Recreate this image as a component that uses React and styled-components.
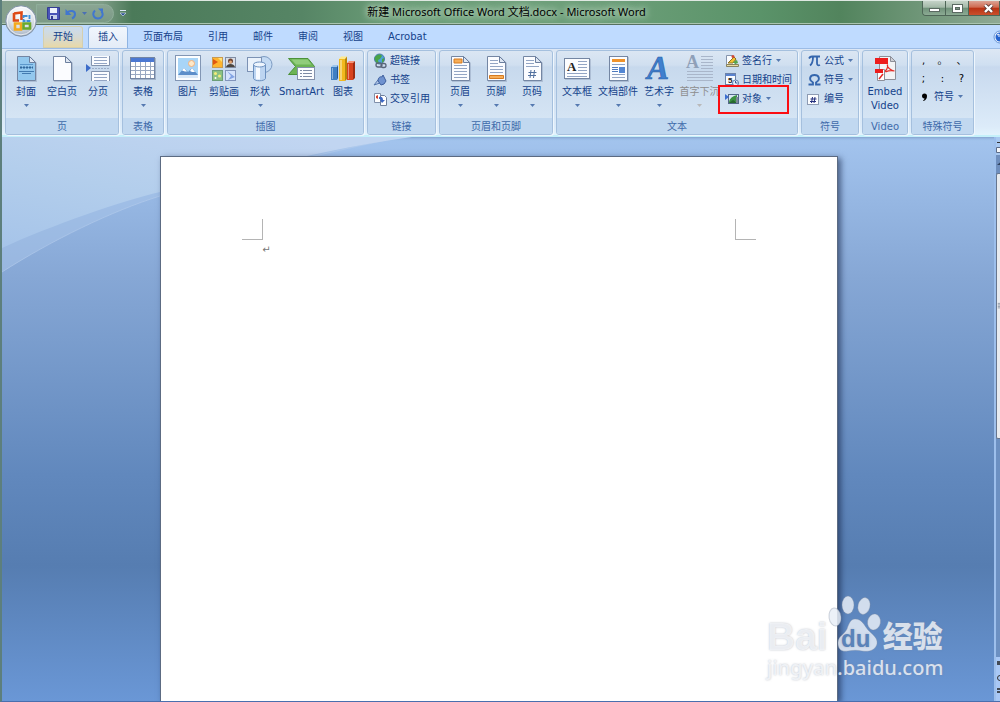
import React from 'react';
import styled, { createGlobalStyle } from 'styled-components';

const GlobalStyle = createGlobalStyle`
    * {
        box-sizing: border-box;
    }
    body {
        margin: 0;
        font-family: 'DejaVu Sans', 'Noto Sans CJK SC', sans-serif;
        font-size: 10px;
        color: #15428b;
    }
    button {
        margin: 0;
        padding: 0;
        border: 0;
        background: none;
        font: inherit;
        color: inherit;
        cursor: pointer;
    }
`

const Window = styled.div`
    position: relative;
    display: flex;
    flex-direction: column;
    min-height: 100vh;
    overflow: hidden;
    border-left: 2px solid #5d7f7c;
    border-bottom: 1px solid #4a6fae;
    background: #bfdbff;
`

/* ---------- title bar ---------- */

const TitleBar = styled.header`
    display: grid;
    grid-template-columns: 1fr auto 1fr;
    height: 25px;
    border-top: 1px solid #dfe8e2;
    border-bottom: 1px solid #56715f;
    box-shadow: inset 0 -1px 0 #a9c4b0;
    background: linear-gradient(90deg, #86a18d 0, #7d9c86 100px, #4b7a59 130px, #568565 300px, #6d9f79 40%, #6d9f79 60%, #5a9369 76%, #52845d 84%, #6f9678 92%, #8fa994 100%);
`

const QuickAccess = styled.div`
    display: flex;
    align-items: center;
    justify-self: start;
    height: 19px;
    margin: 3px 0 0 34px;
    padding: 0 9px 0 10px;
    gap: 5px;
    border: 1px solid #8fae9a;
    border-radius: 0 10px 10px 0;
    background: linear-gradient(#8aa593, #7b9a86);
`

const QuickButton = styled.button`
    display: flex;
    align-items: center;
`

const QuickWrap = styled.div`
    display: flex;
    align-items: flex-start;
    gap: 6px;
`

const MoreButton = styled.button`
    display: flex;
    height: 24px;
    align-items: center;
`

const Title = styled.h1`
    margin: 0;
    padding-left: 11px;
    font-family: 'Noto Sans', 'Noto Sans CJK SC', sans-serif;
    font-size: 11px;
    font-weight: 400;
    line-height: 22px;
    color: #000;
    white-space: nowrap;
    text-shadow: 0 0 6px #cfe3d3, 0 0 8px #cfe3d3;
`

const WindowControls = styled.div`
    display: flex;
    justify-self: end;
    height: 15px;
    border: 1px solid #4e6657;
    border-top: 0;
    border-right: 0;
    border-radius: 0 0 0 4px;
    overflow: hidden;
`

const ControlButton = styled.button`
    display: flex;
    align-items: center;
    justify-content: center;
    width: ${props => props.$close ? '31px' : '23px'};
    padding-left: ${props => props.$close ? '8px' : '0'};
    border-right: 1px solid #4e6657;
    background: ${props => props.$close
        ? 'linear-gradient(#dba394, #cf6a50 45%, #b93214 50%, #c9502c)'
        : 'linear-gradient(#c5d3c8, #a3b9a8 45%, #6f9179 50%, #8cab94)'};
`

const OfficeButton = styled.button`
    position: absolute;
    z-index: 2;
    top: 5px;
    left: 3px;
    width: 32px;
    height: 32px;
`

/* ---------- tabs ---------- */

const Tabs = styled.nav`
    display: flex;
    align-items: flex-end;
    height: 23px;
    padding-left: 41px;
    gap: 5px;
    background: #bfdbff;
`

const Tab = styled.button`
    height: 22px;
    padding: 0 10px;
    line-height: 22px;
    border-radius: 3px 3px 0 0;
    ${props => props.$hot && `
        background: linear-gradient(#c9dcf2, #d5d9d4 50%, #ead9a4);
        box-shadow: inset 0 0 0 1px #d5cfae;
    `}
    ${props => props.$active && `
        background: linear-gradient(#f2f7fd, #e3ecf7);
        box-shadow: inset 1px 1px 0 #8fb4e2, inset -1px 0 0 #8fb4e2;
    `}
`

const HelpButton = styled.button`
    align-self: center;
    width: 7px;
    height: 14px;
    margin-left: auto;
    overflow: hidden;
`

/* ---------- ribbon ---------- */

const Ribbon = styled.div`
    display: flex;
    gap: 3px;
    height: 89px;
    padding: 1px 3px 0;
    border-top: 1px solid #9cbce6;
    border-bottom: 2px solid #c4f0fa;
    background: linear-gradient(#dde7f4, #cfdff1 16px, #c8d9ee 18px, #dcebf9 90%, #e3f3fd);
`

const GroupBox = styled.section`
    display: flex;
    flex: none;
    flex-direction: column;
    height: 85px;
    border: 1px solid #a5c0de;
    border-radius: 3px;
    box-shadow: 1px 1px 0 #eef6fd;
    background: linear-gradient(#dbe6f3, #d0dff0 14px, #c7d9ed 16px, #d9e8f6);
    overflow: hidden;
`

const GroupBody = styled.div`
    display: flex;
    flex: 1;
    padding: 0 2px;
`

const GroupLabel = styled.h2`
    margin: 0;
    height: 16px;
    font-size: 10px;
    font-weight: 400;
    line-height: 17px;
    text-align: center;
    color: #3e6aaa;
    background: #c1d8f0;
`

const BigButton = styled.button`
    display: flex;
    flex-direction: column;
    align-items: center;
    width: ${props => props.$width || 36}px;
    padding-top: 4px;
    line-height: 14px;
    white-space: nowrap;
    color: ${props => props.disabled ? '#8d8d8d' : 'inherit'};

    svg {
        flex: none;
        overflow: visible;
    }
    span {
        margin-top: 2px;
    }
    span + svg {
        margin-top: 5px;
    }
`

const Column = styled.div`
    display: flex;
    flex-direction: column;
`

const SmallRow = styled.div`
    position: relative;
    display: flex;
`

const SmallButton = styled.button`
    display: flex;
    align-items: center;
    height: 19px;
    padding: 0 3px;
    gap: 1px;
    line-height: 19px;
    white-space: nowrap;

    span + svg {
        margin-left: 3px;
    }
`

const RedBox = styled.i`
    position: absolute;
    top: -4px;
    left: -4px;
    width: 71px;
    height: 29px;
    border: 2px solid #fb0d12;
    pointer-events: none;
`

const MarkRow = styled.div`
    display: flex;
    height: 18px;
`

const MarkButton = styled.button`
    width: 19px;
    color: #000;
    line-height: 20px;
`

/* ---------- document ---------- */

const Workspace = styled.main`
    position: relative;
    display: flex;
    flex: 1;
    padding-left: 2px;
    background: linear-gradient(#a3c4ee, #86a7d5 25%, #6188bd 60%, #567db1 76%, #6a97d6);
    box-shadow: inset 0 3px 3px -2px #7f9cc8;
`

const Swoosh = styled.svg`
    position: absolute;
    top: 0;
    left: 0;
`

const Page = styled.article`
    position: relative;
    display: flex;
    flex-direction: column;
    width: 68%;
    margin: 19px auto 0;
    padding: 62px 81px 0;
    border: 1px solid #5c6b82;
    border-bottom: 0;
    background: #fff;
    box-shadow: 3px 2px 6px rgba(20, 35, 70, 0.6);
    color: #777;
`

const Margins = styled.div`
    display: flex;
    justify-content: space-between;
`

const Corner = styled.i`
    width: 21px;
    height: 21px;
    border-bottom: 1px solid #b4b4b4;
    ${props => props.$right ? 'border-left' : 'border-right'}: 1px solid #b4b4b4;
`

const Paragraph = styled.p`
    margin: 4px 0 0 20px;
    line-height: 12px;
`

const ScrollGutter = styled.aside`
    position: relative;
    display: flex;
    flex-direction: column;
    width: 6px;
    border-left: 2px solid #9dbfec;
    background: #6c90c2;
    overflow: hidden;
`

const ScrollTop = styled.div`
    height: 36px;
    background: linear-gradient(#a9c8f0 18px, #6f8fbe 18px);

    svg {
        display: block;
    }
`

const Thumb = styled.div`
    display: flex;
    align-items: center;
    height: 266px;
    border: 1px solid #66768f;
    border-right: 0;
    border-radius: 2px 0 0 2px;
    background: #e8ebef;
`

const ScrollBottom = styled.div`
    height: 44px;
    margin-top: auto;
    background: #a9c8f5;
`

/* ---------- watermark ---------- */

const Watermark = styled.div`
    position: absolute;
    right: 55px;
    bottom: 20px;
    width: 178px;
    color: rgba(248, 250, 253, 0.78);
    text-shadow: 0 0 2px rgba(120, 130, 150, 0.5);
    font-family: 'Liberation Sans', 'Noto Sans CJK SC', sans-serif;
    white-space: nowrap;
    pointer-events: none;
`

const Brand = styled.div`
    display: flex;
    align-items: flex-end;
    height: 57px;
    font-size: 39px;
    font-weight: 700;
    line-height: 30px;

    svg {
        flex: none;
    }
    b + svg + b {
        font-size: 30px;
    }
`

const Site = styled.div`
    margin-top: 3px;
    font-family: 'Noto Sans', sans-serif;
    font-size: 20px;
    font-weight: 500;
    line-height: 26px;
`

/* ---------- icons ---------- */

const Arrow = ({ color = '#5579b0' }) => (
    <svg width="5" height="3" viewBox="0 0 5 3"><path d="M0 0h5L2.5 3z" fill={color} /></svg>
)

const Big = ({ children, w = 28 }) => (
    <svg width={w} height="28" viewBox={`0 0 ${w} 28`}>{children}</svg>
)

const Small = ({ children }) => (
    <svg width="16" height="16" viewBox="0 0 16 16">{children}</svg>
)

const Sheet = ({ fill = '#fbfcff' }) => (
    <g>
        <path d="M6 2h13l6 6v19H6z" fill="#8b9bb5" opacity=".45" />
        <path d="M5.500 1.500h12l6 6v18h-18z" fill={fill} stroke="#7486a3" />
        <path d="M17.500 1.500v6h6z" fill="#dfe7f3" stroke="#6c7f9e" />
    </g>
)

const Lines = ({ x = 8, y = 9, w = 12, n = 5, gap = 3, color = '#93a5c4' }) => (
    <g stroke={color}>
        {Array.from({ length: n }, (_, i) => <path key={i} d={`M${x} ${y + i * gap + 0.5}h${w}`} />)}
    </g>
)

const OfficeLogo = () => (
    <svg width="32" height="32" viewBox="0 0 32 32">
        <defs>
            <radialGradient id="orb" cx=".5" cy=".25" r=".8">
                <stop offset="0" stopColor="#fff" />
                <stop offset=".55" stopColor="#dde3ea" />
                <stop offset="1" stopColor="#99a8bb" />
            </radialGradient>
        </defs>
        <circle cx="16" cy="16" r="15.300" fill="url(#orb)" stroke="#7f90a5" />
        <circle cx="16" cy="16" r="13.800" fill="none" stroke="#fff" opacity=".7" />
        <g fill="none" strokeWidth="2.600">
            <path d="M9 8.500l7.500-1v7.500M14 15.500H9V8" stroke="#dd4a17" />
            <path d="M18.500 11h6v5h-6z" stroke="#3d8fd8" strokeWidth="1.800" strokeDasharray="4 1" />
            <path d="M10 18.500h6v6h-6z" stroke="#f4a91c" />
            <path d="M18.500 18.500H25V23.500h-6.500z" stroke="#6aa92c" />
        </g>
    </svg>
)

const SaveIcon = () => (
    <svg width="13" height="13" viewBox="0 0 13 13">
        <path d="M.5.5h12v12h-11l-1-1z" fill="#4a54b8" stroke="#343c93" />
        <path d="M3 1h7v5H3z" fill="#eef2fc" />
        <path d="M3 8h7v4H3z" fill="#c9d2ea" />
        <path d="M4 9h2v3H4z" fill="#343c93" />
    </svg>
)

const UndoIcon = () => (
    <svg width="12" height="12" viewBox="0 0 12 12">
        <path d="M2 4.500c3-2.500 8-2 8 1.500 0 2-1 3.500-3 4.500" fill="none" stroke="#4177cf" strokeWidth="2" />
        <path d="M.5 1v6h6z" fill="#4177cf" />
    </svg>
)

const RedoIcon = () => (
    <svg width="12" height="12" viewBox="0 0 12 12">
        <path d="M3 2.500C-.5 6 2 10.500 6 10.500s6-4 3.500-7" fill="none" stroke="#4177cf" strokeWidth="2" />
        <path d="M6 .5h5v5z" fill="#4177cf" />
    </svg>
)

const CoverIcon = () => (
    <Big>
        <Sheet fill="#93c8ee" />
        <Lines y={9} x={8} n={2} w={13} color="#5d98cb" />
        <path d="M8 12.500h13" stroke="#33689b" strokeWidth="2" strokeDasharray="2 1" />
        <path d="M7 16.500h15M10 18.500h9" stroke="#437bb0" />
    </Big>
)

const BlankIcon = () => <Big><Sheet /></Big>

const BreakIcon = () => (
    <Big>
        <path d="M7.500 1v9.500h18V1M7.500 26v-9.500h18V26" fill="#fafcff" stroke="#8293ae" />
        <Lines x={10} y={2} n={3} w={13} />
        <Lines x={10} y={19} n={3} w={13} />
        <path d="M2 9l5 4-5 4z" fill="#3c6cc9" />
        <path d="M8 13.500h18" stroke="#9bacc7" strokeDasharray="2 1" />
    </Big>
)

const TableIcon = () => (
    <Big>
        <rect x="2" y="3" width="25" height="22" fill="#7889a5" opacity=".5" />
        <rect x="1.500" y="2.500" width="24" height="21" fill="#fff" stroke="#7385a3" />
        <path d="M2 3h23v4H2z" fill="#4b78d2" />
        <path d="M2 11.500h23M2 15.500h23M2 19.500h23M6.500 7v16M11.500 7v16M16.500 7v16M21.500 7v16" stroke="#9aa9c2" />
    </Big>
)

const PictureIcon = () => (
    <Big>
        <rect x="1.500" y=".5" width="25" height="25" fill="#fdfeff" stroke="#8296b4" />
        <rect x="4" y="3" width="20" height="20" fill="#a8d5f7" />
        <circle cx="17.500" cy="8.500" r="3" fill="#fde9c9" stroke="#f3b27b" />
        <path d="M4 20l6-7 4 4 4-4 6 7v1H4z" fill="#5d8ec9" />
        <path d="M8 15.500l2-2.500 3 3.500-2 0zM16 16l2-3 3 4-3 0z" fill="#fff" />
        <path d="M4 20h20v3H4z" fill="#dbe9f7" />
    </Big>
)

const ClipArtIcon = () => (
    <Big>
        <rect x="2.500" y="2.500" width="10" height="10" fill="#ffb52e" stroke="#c99a50" />
        <path d="M3 4l5 3-5 3z" fill="#e0560f" /><path d="M8 3h4v4z" fill="#ffe27a" />
        <rect x="15.500" y="2.500" width="10" height="10" fill="#d9dee6" stroke="#7f8ca3" />
        <circle cx="20.500" cy="6" r="2.500" fill="#704633" /><path d="M16 12c1-4 8-4 9 0z" fill="#4a4540" />
        <circle cx="20.500" cy="7" r="1.500" fill="#e2a878" />
        <rect x="2.500" y="15.500" width="10" height="10" fill="#8cc183" stroke="#6c9d78" />
        <circle cx="5.500" cy="18.500" r="1.500" fill="#f3ec79" /><circle cx="9.500" cy="21" r="1.500" fill="#f3ec79" /><circle cx="5.500" cy="23" r="1" fill="#fff" />
        <rect x="15.500" y="15.500" width="10" height="10" fill="#d5e3fb" stroke="#8294bb" />
        <path d="M17 16l4 5-3 4 7-3z" fill="#84a4e4" />
    </Big>
)

const ShapesIcon = () => (
    <Big>
        <circle cx="18" cy="9.500" r="8" fill="#c3daf3" stroke="#7c9bc2" />
        <rect x="1.500" y="2.500" width="14" height="14" fill="#eaf2fb" stroke="#7c92b4" />
        <path d="M7.500 9.500v14c1 3 11 3 12 0v-14" fill="#bdd5f1" stroke="#6a8fbe" />
        <path d="M10 11v13.500h4V11z" fill="#f6faff" />
        <ellipse cx="13.500" cy="9.500" rx="6" ry="2.500" fill="#eef5fd" stroke="#6a8fbe" />
    </Big>
)

const SmartArtIcon = () => (
    <Big>
        <path d="M.5 3.500H20l6.500 8-5 8H.5l7-8z" fill="#6db455" stroke="#4c9139" />
        <path d="M3.500 4.500H19.500l4 5H8z" fill="#9ad385" opacity=".8" />
        <rect x="9.500" y="12.500" width="17" height="12" fill="#fcfdff" stroke="#8492ac" />
        <path d="M12 15.500h2M15 15.500h9M12 18.500h2M15 18.500h9M12 21.500h2M15 21.500h9" stroke="#7d8ba5" />
    </Big>
)

const ChartIcon = () => (
    <Big>
        <path d="M2 12l2-2h5l-1 2z" fill="#9cc6ee" /><path d="M2 12h6v13H2z" fill="#3f7fc4" /><path d="M8 12l1-2v13l-1 2z" fill="#28578f" />
        <path d="M18 8l2-2h6l-2 2z" fill="#f59377" /><path d="M18 8h6v17h-6z" fill="#d9421e" /><path d="M24 8l2-2v17l-2 2z" fill="#9f2b10" />
        <path d="M10 4l2-2.500h6L16 4z" fill="#ffe98a" /><path d="M10 4h6v22h-6z" fill="#f2b91d" /><path d="M16 4l2-2.500V24l-2 2z" fill="#b98607" />
        <path d="M11 5h2v20h-2zM3 13h1v11H3zM19 9h1v15h-1z" fill="#fff" opacity=".4" />
    </Big>
)

const HeaderIcon = () => (
    <Big><Sheet /><path d="M8 4h8v4H8z" fill="#f6ad58" stroke="#d67a1f" /><Lines y={10} n={5} w={13} /></Big>
)

const FooterIcon = () => (
    <Big><Sheet /><Lines y={5} n={2} w={8} /><Lines y={11} n={3} w={13} /><path d="M7.500 20.500h14v3h-14z" fill="#f6ad58" stroke="#d67a1f" /></Big>
)

const PageNumberIcon = () => (
    <Big>
        <Sheet /><Lines y={5} n={2} w={8} /><Lines y={11} n={1} w={13} />
        <path d="M13 15l-1 8M16.500 15l-1 8M10.500 17.500h8M10 20.500h8" stroke="#51709f" />
    </Big>
)

const TextBoxIcon = () => (
    <Big>
        <rect x="2" y="4" width="26" height="21" fill="#8b9bb5" opacity=".45" />
        <rect x="1.500" y="3.500" width="25" height="20" fill="#fcfdff" stroke="#7486a3" />
        <text x="4" y="16" fontFamily="Liberation Serif" fontWeight="700" fontSize="13" fill="#222">A</text>
        <Lines x={15} y={6} n={4} w={9} gap={3} /><Lines x={4} y={18} n={2} w={20} gap={3} />
    </Big>
)

const PartsIcon = () => (
    <Big>
        <rect x="6" y="2" width="19" height="25" fill="#8b9bb5" opacity=".5" />
        <rect x="5.500" y="1.500" width="18" height="24" fill="#fcfdff" stroke="#7486a3" />
        <path d="M8 4h13v3H8z" fill="#f0932b" /><path d="M15 12h6v6h-6z" fill="#5487d3" />
        <Lines x={8} y={9} n={1} w={13} /><Lines x={8} y={12} n={3} w={6} gap={2} color="#4f79bd" /><Lines x={8} y={19} n={2} w={13} />
    </Big>
)

const WordArtIcon = () => (
    <Big>
        <text x="2" y="24" fontFamily="Liberation Serif" fontWeight="700" fontStyle="italic" fontSize="33" fill="#3f80cf" stroke="#2a5fa8" strokeWidth=".6">A</text>
    </Big>
)

const DropCapIcon = () => (
    <Big>
        <text x="0" y="13" fontFamily="Liberation Serif" fontWeight="700" fontSize="18" fill="#8fa0b8">A</text>
        <Lines x={15} y={1} n={5} w={12} color="#a9b6ca" /><Lines x={1} y={16} n={4} w={26} color="#a9b6ca" />
    </Big>
)

const LinkIcon = () => (
    <Small>
        <circle cx="6.500" cy="6" r="5" fill="#4ba2d8" stroke="#4b7aa8" />
        <path d="M3 3c2-2 5-2 6 0l-2 3-2 1 1 4c-3-1-5-4-4-7zM9 6l2-1v3l-2 2z" fill="#4aa447" />
        <path d="M3 12a2 2 0 0 1 2-2h2a2 2 0 0 1 0 4H5a2 2 0 0 1-2-2zM8 12.500a2 2 0 0 1 2-2h1a2 2 0 0 1 0 4h-1a2 2 0 0 1-2-2z" fill="none" stroke="#59667a" strokeWidth="1.300" />
    </Small>
)

const BookmarkIcon = () => (
    <Small>
        <path d="M1 13L5 8l3 0-1 3z" fill="#b7cbe9" stroke="#5476ae" />
        <path d="M5 9c0-3 2-5 4-4l1-2 3 6-2 3-3 1z" fill="#6f92cf" stroke="#3e5f9d" />
    </Small>
)

const CrossRefIcon = () => (
    <Small>
        <path d="M1.500 2.500h6v9h-6z" fill="#fff" stroke="#8090aa" /><path d="M7.500 4.500h4l2 2v8h-6z" fill="#fff" stroke="#6d7f9c" />
        <path d="M3 5l2-1v4L3 7z" fill="#d34434" /><path d="M6 6c3-1 4 1 4 3h2l-3 3-2-3h1c0-1-1-1-2-1z" fill="#3c67c3" />
    </Small>
)

const SignIcon = () => (
    <Small>
        <path d="M1.500 2.500h6l3 3v8h-9z" fill="#fbfdff" stroke="#8594ad" />
        <path d="M1.500 11.500h12v2h-12z" fill="#e9dca3" stroke="#87825f" />
        <path d="M3 10l4-4 2-2 2 2-3 4z" fill="#f2c332" stroke="#8b7124" /><path d="M8 9l4-2 1 3-3 1z" fill="#55a54c" /><circle cx="8" cy="3.500" r="1.500" fill="#d14732" />
    </Small>
)

const DateIcon = () => (
    <Small>
        <rect x=".5" y="1.500" width="10" height="11" fill="#f9fbff" stroke="#6d83aa" />
        <path d="M1 2h9v2H1z" fill="#5a83cf" />
        <text x="3" y="11" fontFamily="Liberation Sans" fontWeight="700" fontSize="8" fill="#222">5</text>
        <circle cx="10.500" cy="11" r="3" fill="#e5effc" stroke="#5e7cae" /><path d="M10.500 9v2h2" fill="none" stroke="#35588f" />
    </Small>
)

const ObjectIcon = () => (
    <Small>
        <rect x="3.500" y="3.500" width="10" height="9" fill="#d8e6f4" stroke="#55688a" />
        <path d="M4 12c0-4 3-6 5-7l3-1 0 4-2 4z" fill="#3c9142" /><path d="M4 12l4-3 5 3z" fill="#27692d" />
        <path d="M0 3l4 3-4 3z" fill="#3d6fd0" /><path d="M11 6h2v6h-2z" fill="#7d8896" />
    </Small>
)

const PiIcon = () => (
    <Small><path d="M2 5.500c1-2 2-2 3-2h8M6 4c0 4-1 7-3 8.500M10 4v6c0 2 1 3 3 2" fill="none" stroke="#3566ad" strokeWidth="1.800" /></Small>
)

const OmegaIcon = () => (
    <Small><path d="M1.500 12.500h4.500v-2C1 7.500 3 3 7.500 3s6.500 4.500 1.500 7.500v2h4.500" fill="none" stroke="#3566ad" strokeWidth="1.800" /></Small>
)

const NumberIcon = () => (
    <Small>
        <rect x=".5" y="3.500" width="11" height="10" fill="#fcfdff" stroke="#8d9bb3" />
        <path d="M5.500 6l-1 6M8 6l-1 6M3.500 8h6M3 10.500h6" stroke="#25307e" />
    </Small>
)

const CommaIcon = () => (
    <Small><path d="M5 7a2.500 2.500 0 1 1 5 0c0 2.500-1 4-3.500 5l-.5-.6c1-.6 1.500-1.200 1.500-2C6 9.500 5 8.500 5 7z" fill="#000" /></Small>
)

const PdfIcon = () => (
    <Big>
        <path d="M8.500 1.500h11l5 5v18h-16z" fill="#f3f3f5" stroke="#8d8f98" /><path d="M19.500 1.500v5h5z" fill="#cfcfd5" stroke="#8d8f98" />
        <path d="M4 3h13v6H4z" fill="#ed1c1c" />
        <path d="M13 17c3-2 4-4 3.500-7.500-1 3 4 6 7 6.500-4-1-7 0-9 1" fill="none" stroke="#e42b25" strokeWidth="1.200" />
        <path d="M6.500 14.500h7v11h-7z" fill="#fff" stroke="#8d8f98" /><path d="M4 14h8v4H4z" fill="#ed1c1c" /><path d="M8 24l4-5" stroke="#e42b25" strokeWidth="1.500" />
    </Big>
)

const Paw = () => (
    <svg width="55" height="57" viewBox="0 0 55 57">
        <g fill="rgba(232,238,247,.84)" stroke="rgba(130,140,160,.35)">
            <ellipse cx="7" cy="22" rx="6" ry="9" transform="rotate(-8 7 22)" />
            <ellipse cx="20" cy="10" rx="6" ry="9" />
            <ellipse cx="36" cy="11" rx="6" ry="8.500" transform="rotate(14 36 11)" />
            <ellipse cx="46" cy="27" rx="6.500" ry="8" transform="rotate(10 46 27)" />
            <path d="M27 24c7 0 9 6 13 11 5 5 10 8 9 14-2 7-9 8-15 7-4-1-9-1-14 0-6 1-10-1-10-8 0-7 6-8 9-14 2-6 4-10 8-10z" />
        </g>
        <text x="13" y="52" fontFamily="Liberation Sans" fontWeight="700" fontSize="24" fill="#5a83b9">du</text>
    </svg>
)

/* ---------- composed parts ---------- */

function Tool({ icon, label, more, width, disabled, children })
{
    return (
        <BigButton type="button" $width={width} disabled={disabled}>
            {icon}
            <span>{children || label}</span>
            {more && <Arrow color={disabled ? '#b9b9b9' : undefined} />}
        </BigButton>
    )
}

function SmallTool({ icon, label, more })
{
    return (
        <SmallButton type="button">
            {icon}
            <span>{label}</span>
            {more && <Arrow />}
        </SmallButton>
    )
}

function Group({ title, children })
{
    return (
        <GroupBox aria-label={title}>
            <GroupBody>{children}</GroupBody>
            <GroupLabel>{title}</GroupLabel>
        </GroupBox>
    )
}

const tabs = ['开始', '插入', '页面布局', '引用', '邮件', '审阅', '视图', 'Acrobat'];

export default function App()
{
    return (
        <Window>
            <GlobalStyle />
            <OfficeButton type="button" aria-label="Office"><OfficeLogo /></OfficeButton>
            <TitleBar>
                <QuickWrap>
                    <QuickAccess>
                        <QuickButton type="button" aria-label="保存"><SaveIcon /></QuickButton>
                        <QuickButton type="button" aria-label="撤消"><UndoIcon /></QuickButton>
                        <QuickButton type="button" aria-label="撤消列表"><Arrow color="#4a6fb4" /></QuickButton>
                        <QuickButton type="button" aria-label="重复"><RedoIcon /></QuickButton>
                    </QuickAccess>
                    <MoreButton type="button" aria-label="自定义">
                        <svg width="6" height="7" viewBox="0 0 6 7"><path d="M0 .5h6" stroke="#dfe8f8" /><path d="M0 3h6L3 6z" fill="#2c4f8f" stroke="#dfe8f8" strokeWidth=".6" /></svg>
                    </MoreButton>
                </QuickWrap>
                <Title>新建 Microsoft Office Word 文档.docx - Microsoft Word</Title>
                <WindowControls>
                    <ControlButton type="button" aria-label="最小化">
                        <svg width="11" height="9" viewBox="0 0 11 9"><rect x=".5" y="4.500" width="10" height="3" fill="#fff" stroke="#5b6a62" /></svg>
                    </ControlButton>
                    <ControlButton type="button" aria-label="还原">
                        <svg width="11" height="9" viewBox="0 0 11 9"><rect x=".5" y=".5" width="10" height="8" fill="#fff" stroke="#5b6a62" /><rect x="3.500" y="3.500" width="4" height="2" fill="#7d9584" stroke="#5b6a62" /></svg>
                    </ControlButton>
                    <ControlButton type="button" aria-label="关闭" $close>
                        <svg width="11" height="9" viewBox="0 0 11 9"><path d="M2 1l7 7M9 1L2 8" stroke="#5d3a36" strokeWidth="4" /><path d="M2 1l7 7M9 1L2 8" stroke="#fff" strokeWidth="2.400" /></svg>
                    </ControlButton>
                </WindowControls>
            </TitleBar>

            <Tabs>
                {tabs.map((name, i) => (
                    <Tab key={name} type="button" $hot={i === 0} $active={i === 1}>{name}</Tab>
                ))}
                <HelpButton type="button" aria-label="帮助">
                    <svg width="14" height="14" viewBox="0 0 14 14"><circle cx="7" cy="7" r="6" fill="#eaf2fd" stroke="#6b97d6" /><circle cx="7" cy="7" r="4.500" fill="#2463cf" /><path d="M4 5l2-1v3" stroke="#fff" fill="none" /></svg>
                </HelpButton>
            </Tabs>

            <Ribbon>
                <Group title="页">
                    <Tool icon={<CoverIcon />} label="封面" more />
                    <Tool icon={<BlankIcon />} label="空白页" />
                    <Tool icon={<BreakIcon />} label="分页" />
                </Group>
                <Group title="表格">
                    <Tool icon={<TableIcon />} label="表格" more />
                </Group>
                <Group title="插图">
                    <Tool icon={<PictureIcon />} label="图片" />
                    <Tool icon={<ClipArtIcon />} label="剪贴画" />
                    <Tool icon={<ShapesIcon />} label="形状" more />
                    <Tool icon={<SmartArtIcon />} label="SmartArt" width={47} />
                    <Tool icon={<ChartIcon />} label="图表" />
                </Group>
                <Group title="链接">
                    <Column>
                        <SmallTool icon={<LinkIcon />} label="超链接" />
                        <SmallTool icon={<BookmarkIcon />} label="书签" />
                        <SmallTool icon={<CrossRefIcon />} label="交叉引用" />
                    </Column>
                </Group>
                <Group title="页眉和页脚">
                    <Tool icon={<HeaderIcon />} label="页眉" more />
                    <Tool icon={<FooterIcon />} label="页脚" more />
                    <Tool icon={<PageNumberIcon />} label="页码" more />
                </Group>
                <Group title="文本">
                    <Tool icon={<TextBoxIcon />} label="文本框" more />
                    <Tool icon={<PartsIcon />} label="文档部件" more width={46} />
                    <Tool icon={<WordArtIcon />} label="艺术字" more />
                    <Tool icon={<DropCapIcon />} label="首字下沉" more disabled width={45} />
                    <Column>
                        <SmallTool icon={<SignIcon />} label="签名行" more />
                        <SmallTool icon={<DateIcon />} label="日期和时间" />
                        <SmallRow>
                            <SmallTool icon={<ObjectIcon />} label="对象" more />
                            <RedBox />
                        </SmallRow>
                    </Column>
                </Group>
                <Group title="符号">
                    <Column>
                        <SmallTool icon={<PiIcon />} label="公式" more />
                        <SmallTool icon={<OmegaIcon />} label="符号" more />
                        <SmallTool icon={<NumberIcon />} label="编号" />
                    </Column>
                </Group>
                <Group title="Video">
                    <Tool icon={<PdfIcon />} width={40}>Embed<br />Video</Tool>
                </Group>
                <Group title="特殊符号">
                    <Column>
                        <MarkRow>
                            <MarkButton type="button">,</MarkButton>
                            <MarkButton type="button">。</MarkButton>
                            <MarkButton type="button">、</MarkButton>
                        </MarkRow>
                        <MarkRow>
                            <MarkButton type="button">;</MarkButton>
                            <MarkButton type="button">:</MarkButton>
                            <MarkButton type="button">?</MarkButton>
                        </MarkRow>
                        <SmallTool icon={<CommaIcon />} label="符号" more />
                    </Column>
                </Group>
            </Ribbon>

            <Workspace>
                <Swoosh width="420" height="140" viewBox="0 0 420 140">
                    <defs>
                        <linearGradient id="sky" x1="0" y1="1" x2=".7" y2="0">
                            <stop offset="0" stopColor="#a6c4e9" />
                            <stop offset=".5" stopColor="#b3ceec" />
                            <stop offset="1" stopColor="#c1d5f1" />
                        </linearGradient>
                    </defs>
                    <path d="M0 0v135C50 103 110 74 158 59 230 40 300 20 400 0z" fill="#a9c6ea" opacity=".5" />
                    <path d="M0 135C50 103 110 74 158 59 230 40 300 20 400 0" fill="none" stroke="#b5cdec" opacity=".6" />
                    <path d="M0 0v111C50 88 120 64 158 55 240 35 310 14 410 0z" fill="url(#sky)" />
                </Swoosh>
                <Page>
                    <Margins><Corner /><Corner $right /></Margins>
                    <Paragraph>↵</Paragraph>
                </Page>
                <ScrollGutter>
                    <ScrollTop>
                        <svg width="6" height="36" viewBox="0 0 6 36"><path d="M1 5.500h5" stroke="#333" /><path d="M.5 10.500h6v5h-6z" fill="#f4f6fa" stroke="#5c6c88" /><path d="M1 28l5-4v4z" fill="#30425f" /></svg>
                    </ScrollTop>
                    <Thumb>
                        <svg width="4" height="8" viewBox="0 0 4 8"><path d="M1 .5h3M1 2.500h3M1 4.500h3M1 6.500h3" stroke="#7c8796" /></svg>
                    </Thumb>
                    <ScrollBottom>
                        <svg width="6" height="44" viewBox="0 0 6 44"><path d="M1 5h3M1 7h3M1 32h3M1 35h3" stroke="#222" strokeWidth="1.500" /><circle cx="4" cy="21" r="2.500" fill="none" stroke="#333" /></svg>
                    </ScrollBottom>
                </ScrollGutter>
                <Watermark>
                    <Brand><b>Bai</b><Paw /><b>经验</b></Brand>
                    <Site>jingyan.baidu.com</Site>
                </Watermark>
            </Workspace>
        </Window>
    )
}
